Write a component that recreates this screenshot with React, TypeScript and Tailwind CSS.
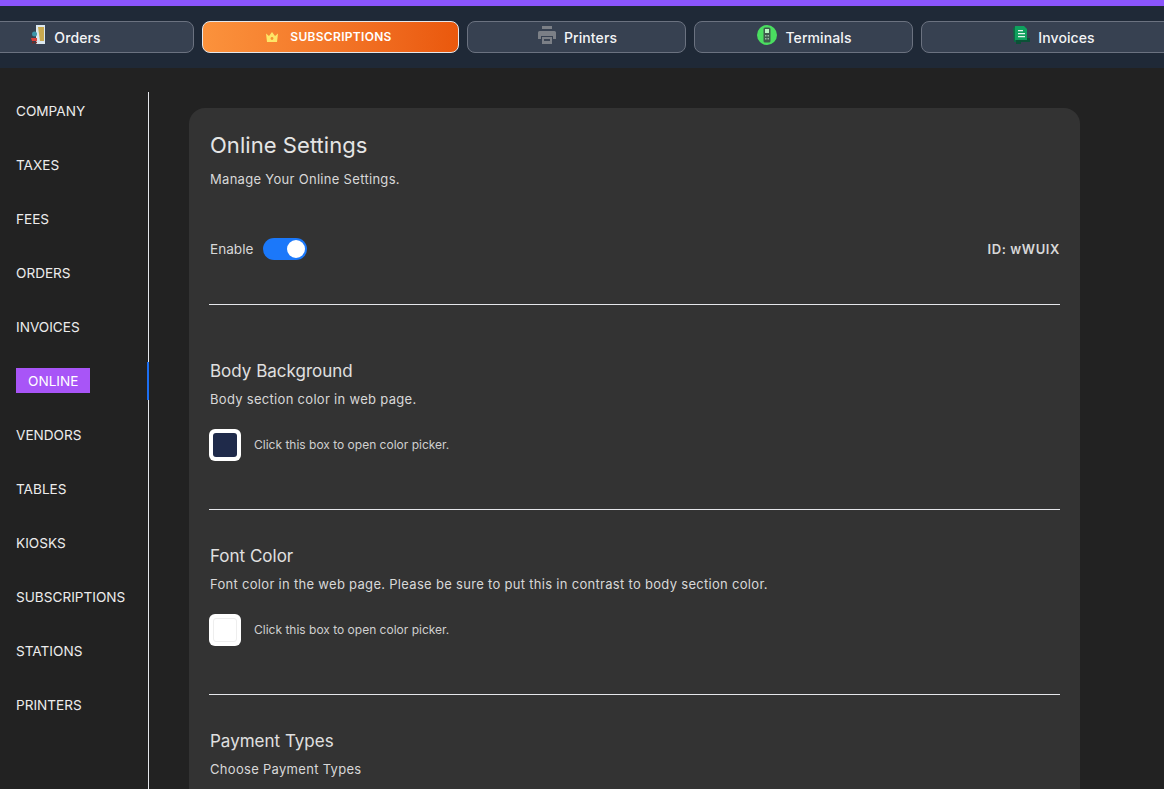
const navItems = ['COMPANY', 'TAXES', 'FEES', 'ORDERS', 'INVOICES', 'ONLINE', 'VENDORS', 'TABLES', 'KIOSKS', 'SUBSCRIPTIONS', 'STATIONS', 'PRINTERS'];

function OrdersIcon() {
  return (
    <svg width="15" height="20" viewBox="0 0 15 20" className="shrink-0">
      <path d="M5 0h9v19H5z" fill="#dbe7ee" />
      <path d="M7 2h6v14H9z" fill="#c9a94f" />
      <circle cx="3.5" cy="9" r="2.5" fill="#3c93a8" />
      <path d="M0 13h6v3H1z" fill="#d8413a" />
      <circle cx="2" cy="17.5" r="1" fill="#7a2622" />
      <circle cx="5" cy="17.5" r="1" fill="#7a2622" />
    </svg>
  );
}

function CrownIcon() {
  return (
    <svg width="12" height="10" viewBox="0 0 12 10" className="shrink-0">
      <path d="M0 1.5l3 2.5L6 0l3 4 3-2.5L11 10H1z" fill="#fde668" />
      <circle cx="6" cy="6.5" r="1.4" fill="#f59331" />
    </svg>
  );
}

function PrinterIcon() {
  return (
    <svg width="18" height="18" viewBox="0 0 18 18" className="shrink-0">
      <path d="M4 0h10v3H4z" fill="#7b7f86" />
      <path d="M1.5 5h15A1.5 1.5 0 0 1 18 6.500V13h-3V10H3v3H0V6.500A1.500 1.500 0 0 1 1.500 5z" fill="#7b7f86" />
      <path d="M4 11h10v7H4z" fill="#7b7f86" />
      <path d="M6 13h6v2H6z" fill="#3b4453" />
    </svg>
  );
}

function TerminalIcon() {
  return (
    <svg width="20" height="20" viewBox="0 0 20 20" className="shrink-0">
      <circle cx="10" cy="10" r="10" fill="#4ade60" />
      <rect x="6.500" y="2.500" width="7" height="15" rx="1.500" fill="#3f5a4c" />
      <rect x="8" y="4" width="4" height="4" fill="#b8f5c0" />
      <path d="M8 10h1.500v1.500H8zM10.500 10H12v1.500h-1.500zM8 13h1.500v1.500H8zM10.500 13H12v1.500h-1.500z" fill="#9bb5a5" />
    </svg>
  );
}

function InvoiceIcon() {
  return (
    <svg width="17" height="18" viewBox="0 0 17 18" className="shrink-0">
      <path d="M0 2l3-2v16H1z" fill="#0b6b43" />
      <path d="M3 12h14v4H8v2H3z" fill="#0b5237" />
      <path d="M2 0h9l3 3v11H2z" fill="#0fa05e" />
      <path d="M5 4h5v1.300H5zM5 7h7v1.300H5zM5 10h7v1.300H5z" fill="#e4f5ec" />
    </svg>
  );
}

function TabButton({ label, icon, width }: { label: string; icon: React.ReactNode; width: string }) {
  return (
    <button className={`${width} h-8 shrink-0 flex justify-center items-center gap-2 pl-[2px] rounded-lg border border-[#6b7280] bg-[#374151] text-sm font-medium tracking-[0.1px] text-[#f3f4f6]`}>
      <span className="-mt-1">{icon}</span>
      <span className="mt-[2px]">{label}</span>
    </button>
  );
}

function ColorField({ title, desc, swatch, spacing }: { title: string; desc: string; swatch: string; spacing: string }) {
  return (
    <div className={`${spacing} border-t border-[#e5e7eb]`}>
      <h3 className="text-[17px] leading-[34px] pl-px text-[#e0e0e0]">{title}</h3>
      <p className="text-[13px] leading-5 mt-px pl-px text-[#d8d8d8] tracking-[0.3px]">{desc}</p>
      <div className="flex items-center gap-[13px] mt-[20px]">
        <div className="w-8 h-8 rounded-md bg-white p-1">
          <div className={`w-full h-full rounded-[3px] ${swatch}`} />
        </div>
        <span className="text-xs text-[#d0d0d0]">Click this box to open color picker.</span>
      </div>
    </div>
  );
}

export default function App() {
  return (
    <div className="h-[789px] w-[1164px] overflow-hidden bg-[#222222] font-['Inter',sans-serif]">
      <div className="h-1.5 bg-[#8b55fc]" />
      <div className="h-[62px] bg-[#1f2937] pt-[15px] overflow-hidden">
        <div className="flex gap-2 -ml-[64px]">
          <TabButton label="Orders" icon={<OrdersIcon />} width="w-[258px]" />
          <button className="w-[257px] h-8 shrink-0 flex justify-center items-center gap-[12px] pr-[3px] rounded-lg border border-[#e5e7eb] bg-gradient-to-r from-[#fb923c] to-[#ea580c] text-xs font-semibold tracking-[0.3px] text-white">
            <CrownIcon />
            SUBSCRIPTIONS
          </button>
          <TabButton label="Printers" icon={<PrinterIcon />} width="w-[219px]" />
          <TabButton label="Terminals" icon={<TerminalIcon />} width="w-[219px]" />
          <TabButton label="Invoices" icon={<InvoiceIcon />} width="w-[264px]" />
        </div>
      </div>

      <div className="flex">
        <nav className="w-[149px] h-[697px] mt-6 shrink-0 border-r border-[#e5e7eb] relative">
          <div className="-mt-2">
            {navItems.map((item) => (
              <div key={item} className="h-[54px] flex items-center pl-4 text-[13.6px] text-[#ececec]">
                {item === 'ONLINE' ? (
                  <span className="block -mt-0.5 bg-[#a855f7] text-white px-3 h-[25px] leading-[26px]">{item}</span>
                ) : (
                  item
                )}
              </div>
            ))}
          </div>
          <div className="absolute right-[-1px] top-[270px] w-0.5 h-[38px] bg-[#1d6ff2]" />
        </nav>

        <main className="ml-10 mt-10 w-[891px] h-[700px] rounded-2xl bg-[#333333] px-5 pt-5">
          <h2 className="text-[22px] leading-[34px] pl-px tracking-[0.05px] text-[#e5e5e5]">Online Settings</h2>
          <p className="text-[13px] leading-5 mt-[7px] pl-px text-[#d8d8d8] tracking-[0.3px]">Manage Your Online Settings.</p>

          <div className="flex items-center justify-between mt-[48px] mb-[43px] h-[24px]">
            <div className="flex items-center gap-[10px] pl-px">
              <span className="text-[13.6px] text-[#d8d8d8]">Enable</span>
              <div className="w-11 h-[22px] rounded-full bg-[#1b78fa] flex items-center justify-end pr-[2px]">
                <div className="w-[18px] h-[18px] rounded-full bg-white" />
              </div>
            </div>
            <span className="text-[13px] mt-0.5 font-semibold tracking-[0.6px] text-[#d8d8d8]">ID: wWUIX</span>
          </div>

          <ColorField
            title="Body Background"
            desc="Body section color in web page."
            swatch="bg-[#1f2a4a]"
            spacing="h-[205px] pt-[49px]"
          />
          <ColorField
            title="Font Color"
            desc="Font color in the web page. Please be sure to put this in contrast to body section color."
            swatch="bg-white border border-[#eeeeee]"
            spacing="h-[185px] pt-[29px]"
          />
          <div className="border-t border-[#e5e7eb] pt-[29px]">
            <h3 className="text-[17px] leading-[34px] pl-px text-[#e0e0e0]">Payment Types</h3>
            <p className="text-[13px] leading-5 mt-px pl-px text-[#d8d8d8] tracking-[0.3px]">Choose Payment Types</p>
          </div>
        </main>
      </div>
    </div>
  );
}
